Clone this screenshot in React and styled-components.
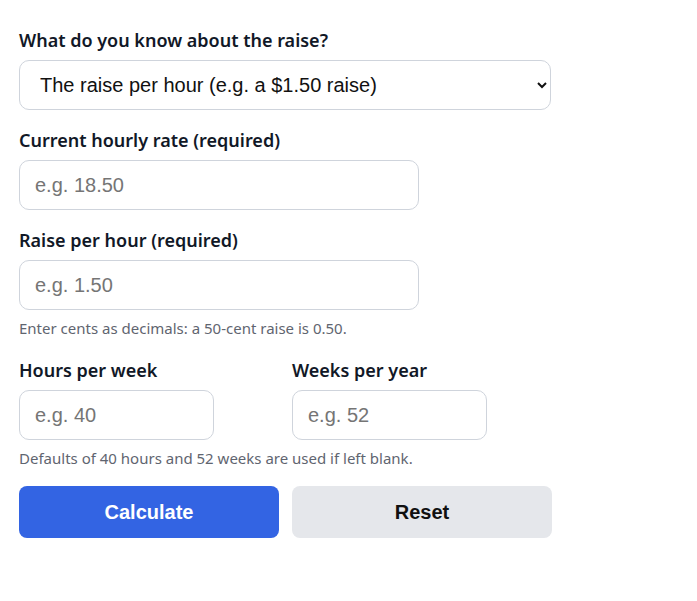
import React from "react";
import styled, { createGlobalStyle } from "styled-components";

const Global = createGlobalStyle`
  html, body { margin: 0; padding: 0; background: #ffffff; }
  body { font-family: "Noto Sans", "Open Sans", sans-serif; color: #111827; }
  * { box-sizing: border-box; }
`;

const Form = styled.form`
  width: 532px;
  margin: 0;
  padding: 28px 0 0 19px;
  display: flex;
  flex-direction: column;
`;

const Field = styled.div`
  display: flex;
  flex-direction: column;
  margin-bottom: ${(p) => (p.$tight ? "0" : "18px")};
`;

const Label = styled.label`
  font-size: 18px;
  font-weight: 600;
  line-height: 24px;
  color: #111827;
  margin-bottom: 8px;
`;

const Select = styled.select`
  width: 532px;
  height: 50px;
  padding: 0 12px 0 16px;
  font-family: "Liberation Sans", Arial, sans-serif;
  font-size: 20px;
  color: #111111;
  background: #ffffff;
  border: 1px solid #cfd4dc;
  border-radius: 10px;
`;

const Input = styled.input`
  width: ${(p) => p.$w || "400px"};
  height: 50px;
  padding: 0 15px;
  font-family: "Liberation Sans", Arial, sans-serif;
  font-size: 20px;
  color: #111111;
  background: #ffffff;
  border: 1px solid #cfd4dc;
  border-radius: 10px;
  outline: none;
  &::placeholder { color: #757575; }
`;

const Hint = styled.p`
  margin: 8px 0 ${(p) => p.$mb || "20px"};
  font-size: 15px;
  line-height: 20px;
  color: #5f6570;
`;

const Row = styled.div`
  display: grid;
  grid-template-columns: 260px 260px;
  column-gap: 13px;
`;

const Buttons = styled.div`
  display: grid;
  grid-template-columns: 260px 260px;
  column-gap: 13px;
`;

const Button = styled.button`
  height: 52px;
  border: none;
  border-radius: 8px;
  font-family: "Liberation Sans", Arial, sans-serif;
  font-size: 20px;
  font-weight: 700;
  cursor: pointer;
  background: ${(p) => (p.$primary ? "#3364e3" : "#e5e7eb")};
  color: ${(p) => (p.$primary ? "#ffffff" : "#111111")};
`;

export default function App() {
  return (
    <>
      <Global />
      <Form onSubmit={(e) => e.preventDefault()}>
        <Field>
          <Label htmlFor="mode">What do you know about the raise?</Label>
          <Select id="mode" defaultValue="hour">
            <option value="hour">The raise per hour (e.g. a $1.50 raise)</option>
            <option value="pct">The raise percentage (e.g. a 3% raise)</option>
            <option value="new">The new hourly rate</option>
          </Select>
        </Field>
        <Field>
          <Label htmlFor="rate">Current hourly rate (required)</Label>
          <Input id="rate" placeholder="e.g. 18.50" />
        </Field>
        <Field $tight>
          <Label htmlFor="raise">Raise per hour (required)</Label>
          <Input id="raise" placeholder="e.g. 1.50" />
        </Field>
        <Hint>Enter cents as decimals: a 50-cent raise is 0.50.</Hint>
        <Row>
          <Field $tight>
            <Label htmlFor="hours">Hours per week</Label>
            <Input id="hours" $w="195px" placeholder="e.g. 40" />
          </Field>
          <Field $tight>
            <Label htmlFor="weeks">Weeks per year</Label>
            <Input id="weeks" $w="195px" placeholder="e.g. 52" />
          </Field>
        </Row>
        <Hint $mb="18px">Defaults of 40 hours and 52 weeks are used if left blank.</Hint>
        <Buttons>
          <Button type="submit" $primary>Calculate</Button>
          <Button type="reset">Reset</Button>
        </Buttons>
      </Form>
    </>
  );
}
